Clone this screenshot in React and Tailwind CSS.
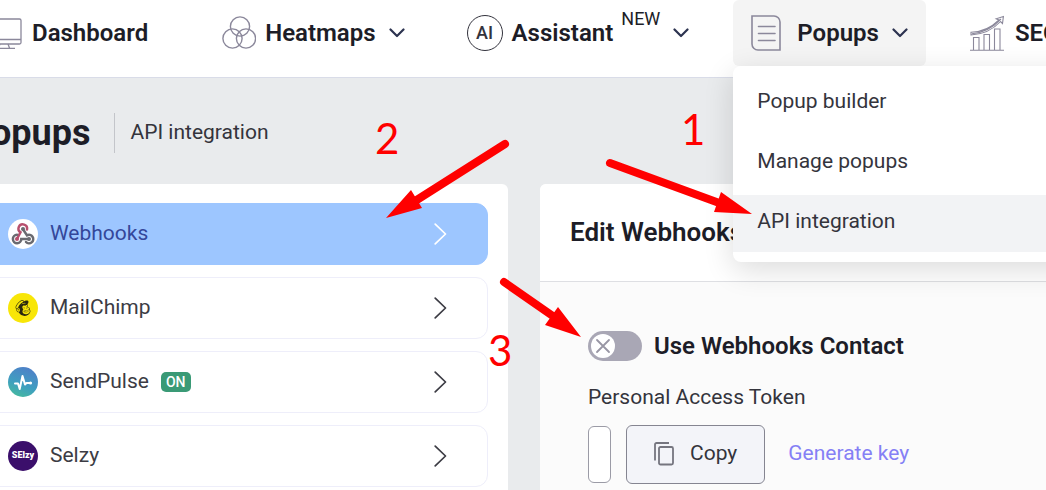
import React, { useState } from 'react';
import { FaMailchimp } from 'react-icons/fa';

// ---------- Icons ----------

const MonitorIcon = () => (
  <svg width="36" height="36" viewBox="0 0 36 36" fill="none" stroke="#8b889b" strokeWidth="1.3" className="shrink-0">
    <rect x="1" y="4" width="34" height="25" rx="1.5" />
    <path d="M1 24.5h34M14 29l-1.5 4M22 29l1.5 4M7 33.3h22" />
  </svg>
);

const CirclesIcon = () => (
  <svg width="34" height="36" viewBox="0 0 34 36" fill="none" stroke="#8b889b" strokeWidth="1.4" className="shrink-0">
    <circle cx="18" cy="11.5" r="9.6" />
    <circle cx="10.5" cy="23.5" r="9.6" />
    <circle cx="24" cy="23.5" r="9.6" />
  </svg>
);

const AiIcon = () => (
  <span className="flex size-9 shrink-0 items-center justify-center rounded-full border border-[#33333d] text-lg font-medium text-[#33333d]">
    AI
  </span>
);

const PageIcon = () => (
  <svg width="30" height="36" viewBox="0 0 30 36" fill="none" stroke="#8b889b" strokeWidth="1.6" strokeLinecap="round" className="shrink-0">
    <path d="M1 1h22a6 6 0 0 1 6 6v28H7a6 6 0 0 1-6-6z" />
    <path d="M7.5 11.5h16.5M7.5 18.5h16.5M7.5 25.5h16.5" />
  </svg>
);

const ChartIcon = () => (
  <svg width="36" height="36" viewBox="0 0 36 36" fill="none" stroke="#8b889b" strokeWidth="1.1" className="shrink-0">
    <path d="M0 35.3h34M3.5 35V22.5h5.5V35M14 35V19.5h5.5V35M24.5 35V14h5.5v21" />
    <path d="M1 17.3Q17 17 29 5l-2.800-1.200 7.200-2.300-.9 7-2-2Q19 19 1 20z" />
    <path d="M2 18.700Q18 17.500 31 4" />
  </svg>
);

const ChevronDown = () => (
  <svg width="16" height="10" viewBox="0 0 16 10" fill="none" stroke="#2c3350" strokeWidth="2.2" strokeLinecap="round" strokeLinejoin="round" className="shrink-0">
    <path d="M1.5 1.5L8 8l6.5-6.5" />
  </svg>
);

const ChevronRight = () => (
  <svg width="13" height="22" viewBox="0 0 13 22" fill="none" stroke="currentColor" strokeWidth="1.7" strokeLinecap="round" strokeLinejoin="round" className="shrink-0">
    <path d="M1.2 1.2L11.5 11 1.2 20.8" />
  </svg>
);

const CopyIcon = () => (
  <svg width="20" height="24" viewBox="0 0 20 24" fill="none" stroke="#75757f" strokeWidth="1.8" strokeLinejoin="round" className="shrink-0">
    <path d="M1 18.5V2.5A1.5 1.5 0 0 1 2.5 1H15" />
    <rect x="5" y="5" width="14" height="17.5" rx="1.5" />
  </svg>
);

const WebhooksLogo = () => (
  <svg width="30" height="30" viewBox="0 0 30 30" fill="none" strokeWidth="2.5" strokeLinecap="round" className="shrink-0">
    <circle cx="15" cy="15" r="15" fill="#fff" />
    <path d="M19 10.5a4.3 4.3 0 1 0-6.5 2.8L9 19.8" stroke="#b8506e" />
    <path d="M15 10.2l4 6.2a4.2 4.2 0 1 1-1 6.6" stroke="#6a6a70" />
    <path d="M9 15.8a4.2 4.2 0 1 0 4.3 4.2h7.5" stroke="#6a6a70" />
    <circle cx="9" cy="20" r="2" fill="#b8506e" />
    <circle cx="15" cy="10" r="2" fill="#6a6a70" />
    <circle cx="21" cy="20" r="2" fill="#6a6a70" />
  </svg>
);

const MailChimpLogo = () => (
  <span className="flex size-[30px] shrink-0 items-center justify-center rounded-full bg-[#f8e608] text-[#2a2810]">
    <FaMailchimp size={18} />
  </span>
);

const SendPulseLogo = () => (
  <svg width="30" height="30" viewBox="0 0 30 30" fill="none" className="shrink-0">
    <defs>
      <linearGradient id="pulse" x1="0.7" y1="0" x2="0.3" y2="1">
        <stop offset="0" stopColor="#4f7fc8" />
        <stop offset="0.6" stopColor="#3f9fc0" />
        <stop offset="1" stopColor="#45b99e" />
      </linearGradient>
    </defs>
    <circle cx="15" cy="15" r="15" fill="url(#pulse)" />
    <path d="M7 16.5h3l1.7 5.5L14.5 9l2.5 8.5 1.5-1.5h4" stroke="#fff" strokeWidth="2" strokeLinecap="round" strokeLinejoin="round" />
    <circle cx="22.5" cy="16" r="1.6" fill="#fff" />
  </svg>
);

const SelzyLogo = () => (
  <span className="flex size-[30px] shrink-0 items-center justify-center rounded-full bg-[#3b0f6b] text-[9px] font-black text-white">
    SElzy
  </span>
);

// ---------- Data ----------

const INTEGRATIONS = [
  { name: 'Webhooks', Logo: WebhooksLogo },
  { name: 'MailChimp', Logo: MailChimpLogo },
  { name: 'SendPulse', Logo: SendPulseLogo, on: true },
  { name: 'Selzy', Logo: SelzyLogo },
];

const MENU = ['Popup builder', 'Manage popups', 'API integration'];

// ---------- Blocks ----------

const NavButton = ({ icon, label, badge }) => (
  <button type="button" className="flex h-[66px] shrink-0 items-center px-[18px] text-2xl font-semibold">
    {icon}
    <span className="ml-[9px]">{label}</span>
    {badge && <sup className="top-0 mb-7 ml-2 text-lg leading-none font-normal">{badge}</sup>}
    <span className="ml-[13px]">
      <ChevronDown />
    </span>
  </button>
);

const PopupsMenu = () => (
  <div className="relative shrink-0">
    <button type="button" className="flex h-[66px] items-center rounded-md bg-[#f4f4f4] px-[18px] text-2xl font-semibold" aria-expanded="true">
      <PageIcon />
      <span className="mr-[13px] ml-4">Popups</span>
      <ChevronDown />
    </button>
    <ul className="absolute top-full left-0 z-20 flex w-[400px] flex-col gap-[3px] rounded-lg bg-white pt-[9px] pb-[10px] shadow-[0_8px_30px_rgba(0,0,0,0.14)]">
      {MENU.map((item) => (
        <li key={item}>
          <a
            href="#"
            className={`flex h-[57px] items-center px-6 pb-1 text-[21px] text-[#34343c] ${
              item === 'API integration' ? 'bg-[#f2f3f5]' : 'hover:bg-[#f2f3f5]'
            }`}
          >
            {item}
          </a>
        </li>
      ))}
    </ul>
  </div>
);

const IntegrationRow = ({ name, Logo, on, active, onSelect }) => (
  <button
    type="button"
    onClick={onSelect}
    className={`flex h-[62px] w-full items-center rounded-xl border px-[19px] text-left text-[21px] ${
      active ? 'border-[#9dc6ff] bg-[#9dc6ff] text-[#34479a]' : 'border-[#eeeefa] bg-white text-[#3c3c44]'
    }`}
  >
    <Logo />
    <span className="ml-3">{name}</span>
    {on && <span className="ml-3 rounded-[5px] bg-[#3a9a76] px-[5px] text-sm leading-5 font-medium text-white">ON</span>}
    <span className={`mr-[21px] ml-auto ${active ? 'text-white' : 'text-[#3c3c44]'}`}>
      <ChevronRight />
    </span>
  </button>
);

const Toggle = ({ checked, onChange }) => (
  <label className="flex items-center gap-3 text-2xl font-semibold">
    <input type="checkbox" role="switch" checked={checked} onChange={onChange} className="peer sr-only" />
    <span className="flex h-[30px] w-[54px] items-center rounded-full bg-[#a9a7b5] px-[3px] peer-checked:justify-end peer-checked:bg-[#3a9a76]">
      <svg width="24" height="24" viewBox="0 0 24 24">
        <circle cx="12" cy="12" r="12" fill="#fff" />
        <path d="M6 6l12 12M18 6L6 18" stroke="#9896a4" strokeWidth="1.8" strokeLinecap="round" />
      </svg>
    </span>
    Use Webhooks Contact
  </label>
);

// Numbered red arrows over the page
const Annotations = () => (
  <div className="pointer-events-none absolute inset-0 z-30 font-['Lato',sans-serif] text-[42px] leading-none text-[#ff0000]">
    <svg width="1046" height="490" viewBox="0 0 1046 490" className="absolute top-0 left-0" fill="#ff0000" stroke="#ff0000" strokeLinecap="round">
      <path d="M505 144L412 203M610 163L722 204M504 282L560 321" strokeWidth="8" />
      <path d="M386 218L411 190L422 208zM752 214L721 192L714 212zM581 337L558 307L545 325z" stroke="none" />
    </svg>
    <span className="absolute top-[117px] left-[375px]">2</span>
    <span className="absolute top-[108px] left-[681px]">1</span>
    <span className="absolute top-[329px] left-[488px]">3</span>
  </div>
);

const App = () => {
  const [selected, setSelected] = useState('Webhooks');
  const [enabled, setEnabled] = useState(false);

  return (
    <div className="relative h-screen overflow-hidden bg-[#e9ebed] font-['Roboto',sans-serif] text-[#1d1d27]">
      <header className="border-b border-[#d9dce8] bg-white pb-[11px]">
        <nav className="-ml-8 flex gap-[26px]">
          <a href="#" className="flex h-[66px] shrink-0 items-center pr-[30px] pl-[18px] text-2xl font-semibold">
            <MonitorIcon />
            <span className="ml-[10px]">Dashboard</span>
          </a>
          <NavButton icon={<CirclesIcon />} label="Heatmaps" />
          <NavButton icon={<AiIcon />} label="Assistant" badge="NEW" />
          <PopupsMenu />
          <NavButton icon={<ChartIcon />} label="SEO" />
        </nav>
      </header>

      <main className="-ml-8">
        <div className="flex h-[106px] items-center pt-1">
          <h1 className="text-4xl font-bold">Popups</h1>
          <span className="ml-6 flex h-10 items-center border-l border-[#c3c5ca] pl-[15px] text-[21px] text-[#34343c]">API integration</span>
        </div>

        <div className="flex items-start gap-8">
          <aside className="w-[540px] shrink-0 rounded-md bg-white px-5 py-[19px]">
            <div className="flex flex-col gap-3">
              {INTEGRATIONS.map((item) => (
                <IntegrationRow key={item.name} {...item} active={selected === item.name} onSelect={() => setSelected(item.name)} />
              ))}
            </div>
          </aside>

          <section className="min-w-0 flex-1 rounded-l-md bg-[#fbfbfb]">
            <h2 className="flex h-[98px] items-center rounded-tl-md border-b border-[#dedfe3] bg-white px-[30px] text-[26px] font-semibold">
              Edit Webhooks
            </h2>
            <div className="px-12 pt-12 pb-8">
              <Toggle checked={enabled} onChange={() => setEnabled(!enabled)} />
              <label htmlFor="token" className="mt-5 block text-[21px] text-[#34343c]">
                Personal Access Token
              </label>
              <div className="mt-[11px] flex items-center gap-[15px]">
                <input id="token" type="text" className="h-[57px] w-[23px] rounded-md border border-[#9b9ba6] bg-white" />
                <button type="button" className="flex h-[59px] items-center gap-4 rounded-md border border-[#858591] bg-[#f3f4f9] px-[27px] text-[21px] text-[#34343c]">
                  <CopyIcon />
                  Copy
                </button>
                <button type="button" className="ml-2 text-[21px] text-[#8580f5]">
                  Generate key
                </button>
              </div>
            </div>
          </section>
        </div>
      </main>

      <Annotations />
    </div>
  );
};

export default App;
